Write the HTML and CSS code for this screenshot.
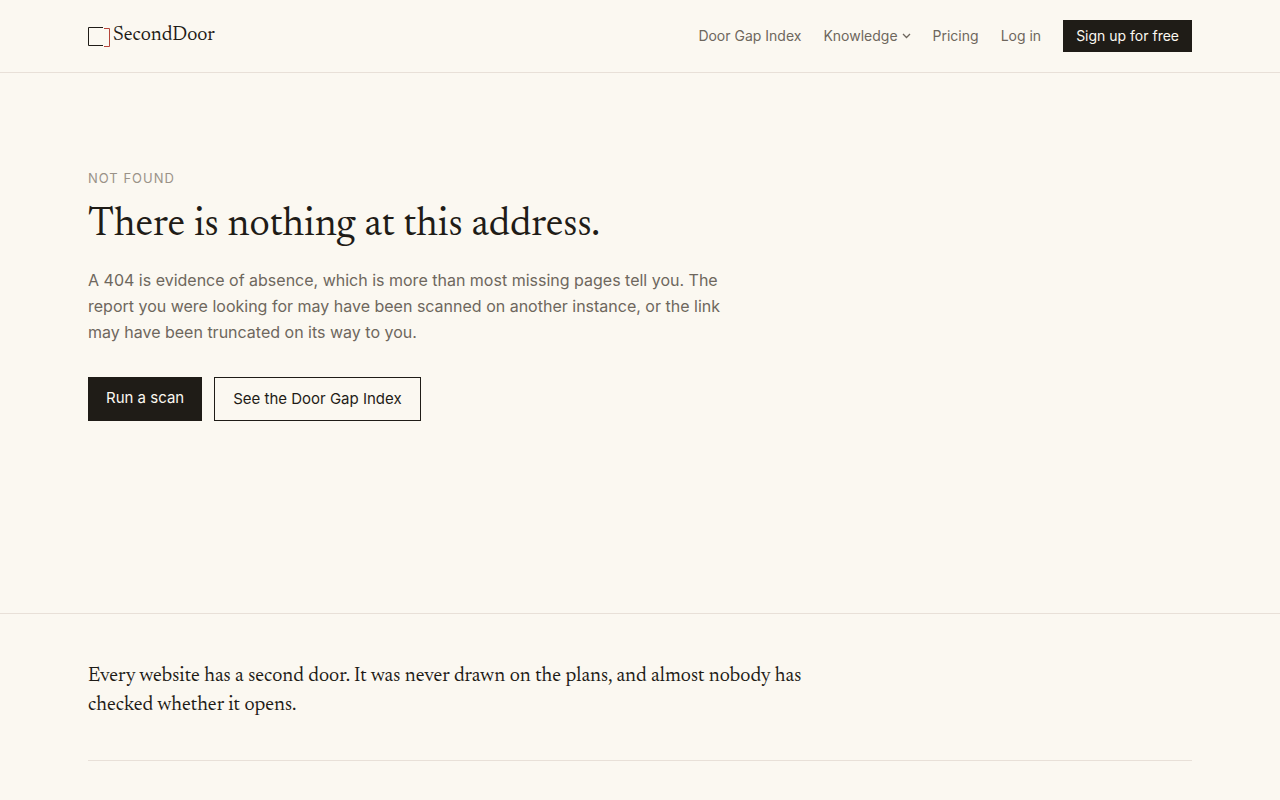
FILE: index.html
```html
<!DOCTYPE html>
<html lang="en">
<head>
<meta charset="utf-8">
<meta name="viewport" content="width=device-width, initial-scale=1">
<title>Not found – SecondDoor</title>
<link rel="stylesheet" href="styles.css">
</head>
<body>
<header class="site-header">
  <div class="container header-row">
    <a class="brand" href="#">
      <svg class="brand-mark" width="22" height="20" viewBox="0 0 22 20" fill="none" aria-hidden="true">
        <path d="M15 .5H.5v18H15" stroke="#1f1c17"/>
        <path d="M16 1.500h5.500v18H16" stroke="#b5453a"/>
      </svg>
      <span class="brand-name">SecondDoor</span>
    </a>
    <nav class="nav" aria-label="Main">
      <a class="nav-link" href="#">Door Gap Index</a>
      <button class="nav-link nav-menu" type="button" aria-expanded="false">Knowledge
        <svg width="9" height="6" viewBox="0 0 9 6" fill="none" aria-hidden="true"><path d="M1 1l3.500 3.500L8 1" stroke="currentColor" stroke-width="1.300"/></svg>
      </button>
      <a class="nav-link" href="#">Pricing</a>
      <a class="nav-link" href="#">Log in</a>
      <a class="signup" href="#">Sign up for free</a>
    </nav>
  </div>
</header>
<main class="container main">
  <p class="eyebrow">Not found</p>
  <h1 class="title">There is nothing at this address.</h1>
  <p class="lead">A 404 is evidence of absence, which is more than most missing pages tell you. The report you were looking for may have been scanned on another instance, or the link may have been truncated on its way to you.</p>
  <div class="actions">
    <a class="button button-primary" href="#">Run a scan</a>
    <a class="button button-outline" href="#">See the Door Gap Index</a>
  </div>
</main>
<footer class="site-footer">
  <div class="container">
    <p class="statement">Every website has a second door. It was never drawn on the plans, and almost nobody has checked whether it opens.</p>
    <hr class="rule">
  </div>
</footer>
</body>
</html>
```
FILE: styles.css
```css
* { box-sizing: border-box; }

body {
  margin: 0;
  background: #fbf8f1;
  color: #1f1c17;
  font-family: Inter, "Liberation Sans", sans-serif;
  font-size: 16px;
}

a { color: inherit; text-decoration: none; }
p, h1 { margin: 0; }

.container {
  max-width: 1152px;
  margin: 0 auto;
  padding: 0 24px;
}

.site-header { border-bottom: 1px solid #e8e0d8; }

.header-row {
  display: flex;
  align-items: center;
  justify-content: space-between;
  padding-top: 20px;
  padding-bottom: 20px;
}

.brand {
  display: flex;
  align-items: center;
  gap: 3px;
  padding-top: 2px;
}

.brand-name {
  padding-bottom: 4px;
  font-family: Newsreader, "Liberation Serif", serif;
  font-size: 20px;
  line-height: 24px;
}

.nav {
  display: flex;
  align-items: center;
  gap: 22px;
  font-size: 14px;
  line-height: 20px;
}

.nav-link { color: #6e675d; }

.nav-menu {
  display: flex;
  align-items: center;
  gap: 4px;
  padding: 0;
  border: 0;
  background: none;
  font: inherit;
}

.signup {
  padding: 6px 13px;
  background: #1f1c17;
  color: #fbf8f1;
}

.main {
  padding-top: 96px;
  padding-bottom: 96px;
}

.eyebrow {
  color: #9a9288;
  font-size: 13px;
  line-height: 18px;
  letter-spacing: 1px;
  text-transform: uppercase;
}

.title {
  margin-top: 16px;
  font-family: Newsreader, "Liberation Serif", serif;
  font-size: 40px;
  font-weight: 400;
  line-height: 46px;
}

.lead {
  max-width: 660px;
  margin-top: 18px;
  color: #6e675d;
  line-height: 26px;
}

.actions {
  display: flex;
  flex-wrap: wrap;
  gap: 12px;
  margin-top: 32px;
}

.button {
  padding: 10px 18px;
  font-size: 15px;
  line-height: 22px;
}

.button-primary { background: #1f1c17; color: #fbf8f1; }
.button-outline { border: 1px solid #1f1c17; }

.site-footer {
  margin-top: 96px;
  padding: 48px 0;
  border-top: 1px solid #e8e0d8;
}

.statement {
  max-width: 736px;
  font-family: Newsreader, "Liberation Serif", serif;
  font-size: 20px;
  line-height: 29px;
}

.rule {
  margin: 40px 0 0;
  border: 0;
  border-top: 1px solid #e8e0d8;
}
```
